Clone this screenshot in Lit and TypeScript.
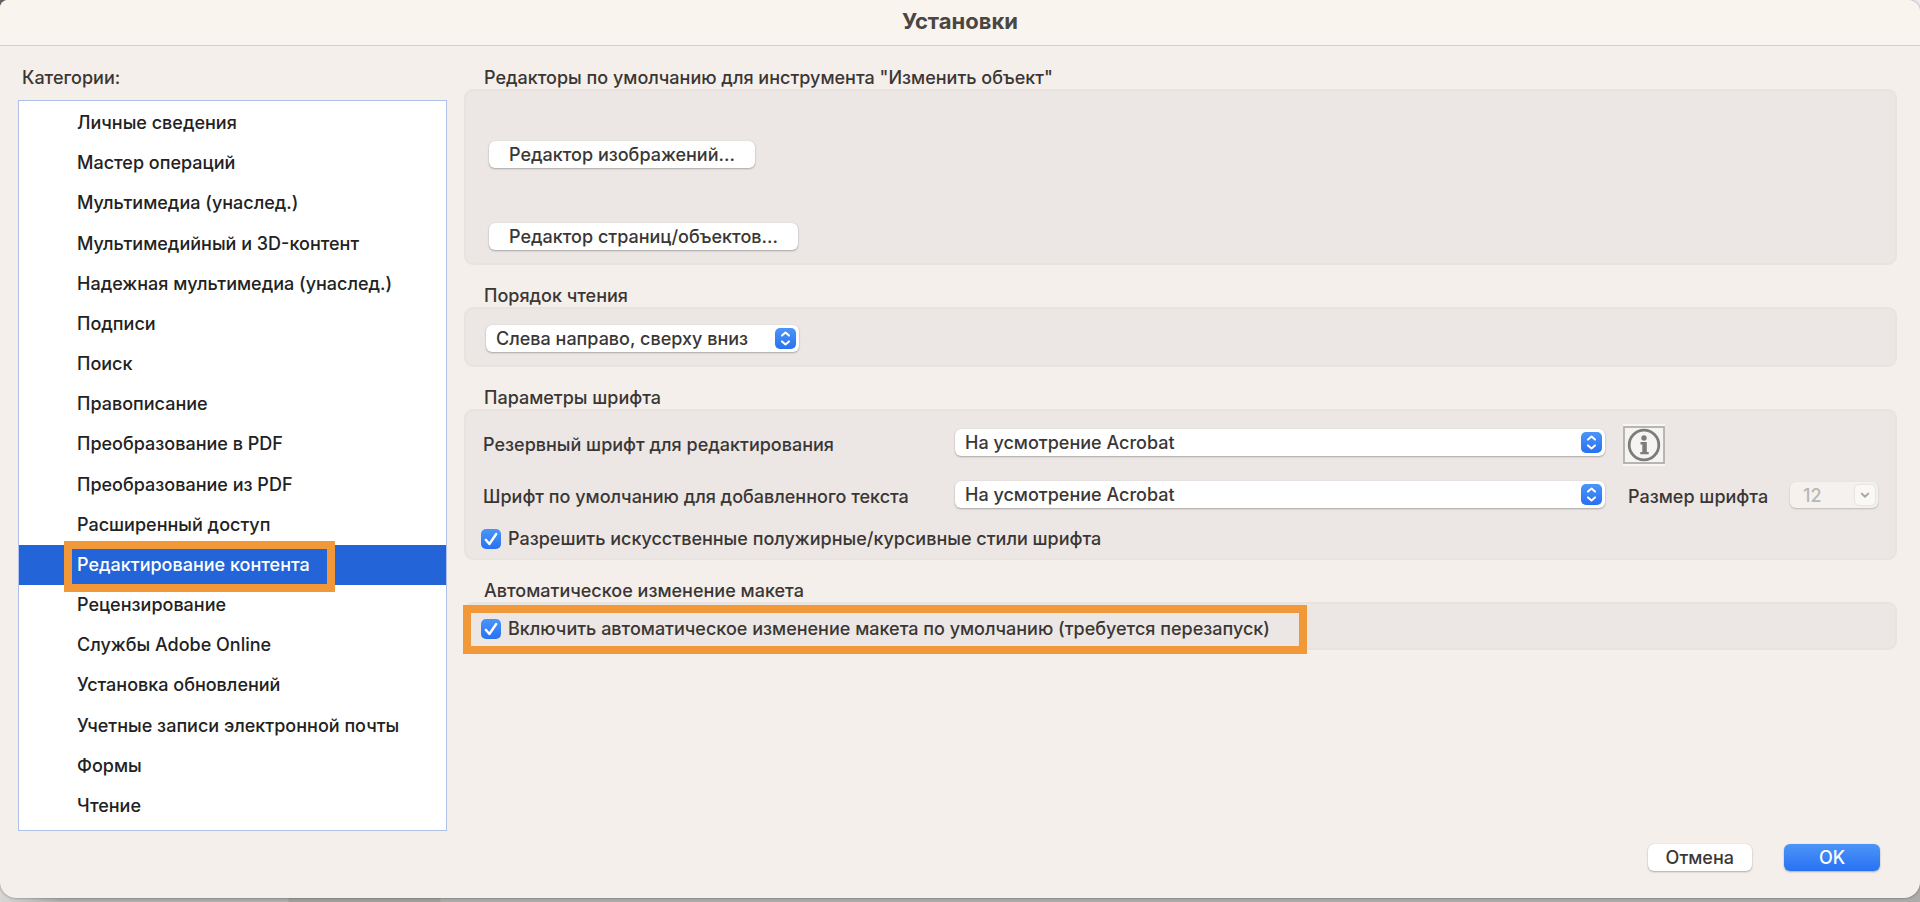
import { LitElement, html, css } from "lit";
import { customElement, property, state } from "lit/decorators.js";
import { classMap } from "lit/directives/class-map.js";

const CATEGORIES = [
  "Личные сведения",
  "Мастер операций",
  "Мультимедиа (унаслед.)",
  "Мультимедийный и 3D-контент",
  "Надежная мультимедиа (унаслед.)",
  "Подписи",
  "Поиск",
  "Правописание",
  "Преобразование в PDF",
  "Преобразование из PDF",
  "Расширенный доступ",
  "Редактирование контента",
  "Рецензирование",
  "Службы Adobe Online",
  "Установка обновлений",
  "Учетные записи электронной почты",
  "Формы",
  "Чтение",
];

/** Pop-up menu with the blue double-chevron handle. */
@customElement("pop-up")
class PopUp extends LitElement {
  @property() value = "";
  @property() label = "";

  static styles = css`
    :host {
      display: grid;
      align-items: center;
      min-width: 0;
    }
    .field {
      grid-area: 1 / 1;
      appearance: none;
      width: 100%;
      height: 27px;
      margin: 0;
      padding: 0 32px 0 10px;
      border: 0;
      border-radius: 6px;
      background: #fff;
      color: #3a3736;
      font: inherit;
      font-optical-sizing: none;
      line-height: 27px;
      box-shadow: 0 1px 2px rgba(0, 0, 0, 0.28), 0 0 1px rgba(0, 0, 0, 0.15);
    }
    .handle {
      grid-area: 1 / 1;
      justify-self: end;
      width: 21px;
      height: 21px;
      margin-right: 3px;
      border-radius: 5px;
      background: linear-gradient(#4b95f8, #2871f3);
      pointer-events: none;
    }
    svg {
      display: block;
      width: 21px;
      height: 21px;
    }
  `;

  render() {
    return html`
      <select class="field" aria-label=${this.label}>
        <option>${this.value}</option>
      </select>
      <span class="handle">
        <svg viewBox="0 0 21 21" fill="none" stroke="#fff" stroke-width="2" stroke-linecap="round" stroke-linejoin="round">
          <path d="M7 7.6 10.5 4.6 14 7.6M7 13.4 10.5 16.4 14 13.4" />
        </svg>
      </span>
    `;
  }
}

/** Tick box followed by its caption. */
@customElement("check-row")
class CheckRow extends LitElement {
  @property() label = "";
  @property({ type: Boolean }) marked = false;

  static styles = css`
    :host {
      display: flex;
    }
    .row {
      position: relative;
      display: flex;
      align-items: center;
      gap: 7px;
      line-height: 24px;
    }
    .marked::after {
      content: "";
      position: absolute;
      inset: -12px -37px -13px -18px;
      border: 8px solid #f19838;
      pointer-events: none;
    }
    .box {
      appearance: none;
      width: 20px;
      height: 20px;
      margin: 0;
      border-radius: 5px;
      background: #fff;
    }
    .box:checked {
      background: linear-gradient(#4b95f8, #2871f3);
    }
    .cell {
      display: grid;
    }
    .cell > * {
      grid-area: 1 / 1;
    }
    svg {
      width: 20px;
      height: 20px;
      pointer-events: none;
    }
  `;

  render() {
    return html`
      <label class=${classMap({ row: true, marked: this.marked })}>
        <span class="cell">
          <input class="box" type="checkbox" checked />
          <svg viewBox="0 0 20 20" fill="none" stroke="#fff" stroke-width="2.4" stroke-linecap="round" stroke-linejoin="round">
            <path d="M4.8 10.8 8.4 15 15.2 5" />
          </svg>
        </span>
        <span>${this.label}</span>
      </label>
    `;
  }
}

@customElement("app-root")
class AppRoot extends LitElement {
  @state() selected = 11;

  static styles = css`
    * {
      box-sizing: border-box;
    }
    :host {
      display: flex;
      flex-direction: column;
      min-height: 100vh;
      box-sizing: border-box;
      padding-bottom: 4px;
      background:
        linear-gradient(#6a656a, #6a656a) 0 0 / 8px 8px no-repeat,
        linear-gradient(#efeaf0, #efeaf0) 100% 0 / 12px 12px no-repeat,
        linear-gradient(90deg, #d8d7d5, #aeadab 60px, #aeadab 288px, #a09f9c 289px, #a09f9c 440px, #adacaa 441px);
      color: #3a3634;
      font-family: Inter, "Noto Sans", sans-serif;
      font-size: 18px;
      font-weight: 500;
      font-optical-sizing: none;
      line-height: 24px;
    }
    .window {
      flex: 1;
      display: flex;
      flex-direction: column;
      border-radius: 8px 12px 16px 16px;
      background: #f4efeb;
      overflow: hidden;
      box-shadow: 0 0 3px rgba(0, 0, 0, 0.4);
    }
    .title {
      margin: 0;
      padding: 9px 0 12px;
      border-bottom: 1px solid #d5d0cc;
      background: #f9f4ee;
      color: #4a4643;
      font-size: 22px;
      font-weight: 700;
      line-height: 24px;
      text-align: center;
    }
    .content {
      flex: 1;
      display: grid;
      grid-template-columns: 429px minmax(0, 1fr);
      gap: 17px;
      padding: 19px 23px 13px 18px;
    }
    .sidebar {
      display: flex;
      flex-direction: column;
      gap: 11px;
    }
    .caption,
    .group-title {
      margin: 0;
      padding: 2px 0 0 4px;
      font-size: inherit;
      font-weight: inherit;
      line-height: 22px;
    }
    .group-title {
      padding-left: 20px;
    }
    .list {
      flex: 1;
      display: grid;
      grid-auto-rows: minmax(40px, 1fr);
      margin: 0;
      padding: 2px 0 4px;
      border: 1px solid #afc1e8;
      background: #fff;
      color: #222;
      list-style: none;
    }
    .item {
      display: grid;
    }
    .entry {
      display: flex;
      align-items: center;
      width: 100%;
      padding: 0 0 0 58px;
      border: 0;
      background: none;
      color: inherit;
      font: inherit;
      font-optical-sizing: none;
      text-align: left;
      white-space: nowrap;
    }
    .entry.selected {
      background: #2365d9;
      color: #fff;
    }
    .name {
      position: relative;
    }
    .selected .name::after {
      content: "";
      position: absolute;
      inset: -12px -25px -15px -13px;
      border: 8px solid #f19838;
      pointer-events: none;
    }
    .settings {
      display: flex;
      flex-direction: column;
      gap: 18px;
    }
    .panel {
      display: flex;
      flex-direction: column;
      align-items: flex-start;
      border: 2px solid #e8e3df;
      border-radius: 9px;
      background: #ece7e4;
    }
    .editors {
      gap: 55px;
      padding: 50px 23px 13px;
    }
    .order {
      padding: 16px 20px 13px;
    }
    .order pop-up {
      width: 313px;
    }
    .fonts {
      align-items: stretch;
      gap: 9px;
      padding: 13px 17px 7px 15px;
    }
    .reflow {
      padding: 13px 15px 7px;
    }
    .font-grid {
      display: grid;
      grid-template-columns: minmax(0, 472px) minmax(0, 1fr) 255px;
      grid-auto-rows: 42px;
      row-gap: 10px;
      align-items: center;
      padding-left: 2px;
    }
    .font-grid pop-up {
      margin: 0 18px 5px 0;
    }
    .size {
      display: flex;
      align-items: center;
      justify-content: space-between;
      padding-left: 5px;
    }
    .combo {
      display: grid;
      align-items: center;
      width: 88px;
      margin-bottom: 4px;
    }
    .combo > * {
      grid-area: 1 / 1;
    }
    .combo-field {
      width: 100%;
      height: 26px;
      padding: 0 28px 0 13px;
      border: 0;
      border-radius: 6px;
      background: #f4f1ef;
      color: #bab6b4;
      font: inherit;
      font-optical-sizing: none;
      box-shadow: 0 1px 2px rgba(0, 0, 0, 0.2);
    }
    .combo-arrow {
      justify-self: end;
      width: 20px;
      height: 20px;
      margin-right: 3px;
      border-radius: 4px;
      background: #faf8f7;
      box-shadow: 0 0 2px rgba(0, 0, 0, 0.18);
      pointer-events: none;
    }
    .info {
      display: grid;
      place-items: center;
      width: 42px;
      height: 42px;
      padding: 0;
      border: 2px solid #f8f6f5;
      border-width: 2px 0;
      background: none;
    }
    .info svg {
      display: block;
      width: 42px;
      height: 38px;
    }
    .button {
      height: 27px;
      padding: 0 18px;
      border: 0;
      border-radius: 6px;
      background: #fff;
      color: #3a3736;
      font: inherit;
      font-optical-sizing: none;
      line-height: 27px;
      white-space: nowrap;
      box-shadow: 0 1px 2px rgba(0, 0, 0, 0.28), 0 0 1px rgba(0, 0, 0, 0.15);
    }
    .editors .button {
      padding: 0 20px;
    }
    .footer {
      display: flex;
      justify-content: flex-end;
      gap: 32px;
      padding: 0 40px 27px;
    }
    .ok {
      width: 96px;
      background: linear-gradient(#4b95f8, #2871f3);
      color: #fff;
    }
  `;

  render() {
    return html`
      <div class="window">
        <h1 class="title">Установки</h1>
        <div class="content">
          <nav class="sidebar" aria-labelledby="categories">
            <h2 class="caption" id="categories">Категории:</h2>
            <ul class="list">
              ${CATEGORIES.map(
                (name, i) => html`
                  <li class="item">
                    <button
                      class=${classMap({ entry: true, selected: i === this.selected })}
                      @click=${() => (this.selected = i)}
                    >
                      <span class="name">${name}</span>
                    </button>
                  </li>
                `
              )}
            </ul>
          </nav>
          <main class="settings">
            <section>
              <h2 class="group-title">Редакторы по умолчанию для инструмента "Изменить объект"</h2>
              <div class="panel editors">
                <button class="button">Редактор изображений...</button>
                <button class="button">Редактор страниц/объектов...</button>
              </div>
            </section>
            <section>
              <h2 class="group-title">Порядок чтения</h2>
              <div class="panel order">
                <pop-up label="Порядок чтения" value="Слева направо, сверху вниз"></pop-up>
              </div>
            </section>
            <section>
              <h2 class="group-title">Параметры шрифта</h2>
              <div class="panel fonts">
                <div class="font-grid">
                  <span>Резервный шрифт для редактирования</span>
                  <pop-up label="Резервный шрифт для редактирования" value="На усмотрение Acrobat"></pop-up>
                  <button class="info" aria-label="Сведения">
                    <svg viewBox="0 0 42 38">
                      <rect x="1" y="1" width="40" height="36" fill="#f6f4f3" stroke="#a9a8a7" stroke-width="1.6" />
                      <circle cx="21" cy="19" r="14.8" fill="none" stroke="#7d7c7b" stroke-width="2.8" />
                      <circle cx="21" cy="12" r="2.7" fill="#7d7c7b" />
                      <path d="M17.5 16h6.3v10h1.9v2.3h-8.4V26h2v-7.6h-1.8z" fill="#7d7c7b" />
                    </svg>
                  </button>
                  <span>Шрифт по умолчанию для добавленного текста</span>
                  <pop-up label="Шрифт по умолчанию для добавленного текста" value="На усмотрение Acrobat"></pop-up>
                  <div class="size">
                    <label for="font-size">Размер шрифта</label>
                    <span class="combo">
                      <input class="combo-field" id="font-size" value="12" disabled />
                      <svg class="combo-arrow" viewBox="0 0 20 20" fill="none" stroke="#aaa6a4" stroke-width="2" stroke-linecap="round" stroke-linejoin="round">
                        <path d="M6.8 8.6 10 11.8 13.2 8.6" />
                      </svg>
                    </span>
                  </div>
                </div>
                <check-row label="Разрешить искусственные полужирные/курсивные стили шрифта"></check-row>
              </div>
            </section>
            <section>
              <h2 class="group-title">Автоматическое изменение макета</h2>
              <div class="panel reflow">
                <check-row marked label="Включить автоматическое изменение макета по умолчанию (требуется перезапуск)"></check-row>
              </div>
            </section>
          </main>
        </div>
        <footer class="footer">
          <button class="button">Отмена</button>
          <button class="button ok">OK</button>
        </footer>
      </div>
    `;
  }
}
